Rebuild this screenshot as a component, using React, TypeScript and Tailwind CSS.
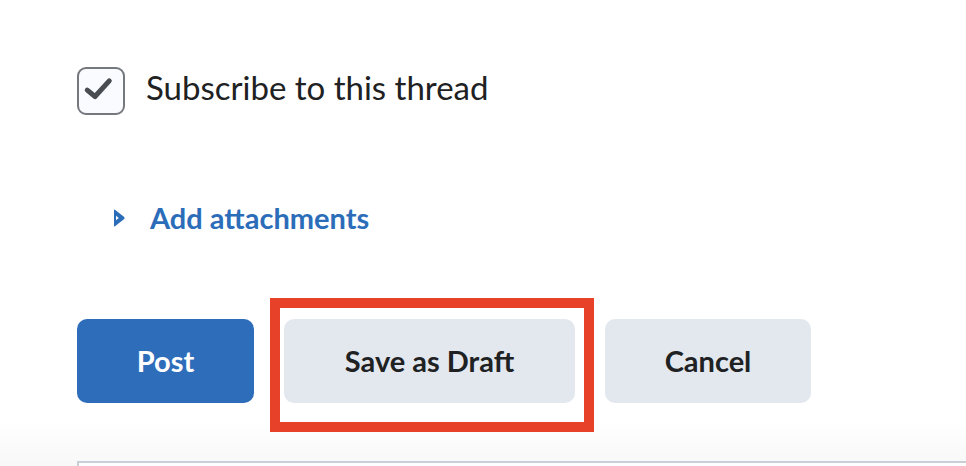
export default function App() {
  return (
    <div
      className="relative h-[466px] w-full overflow-hidden bg-[linear-gradient(to_bottom,#ffffff_0px,#ffffff_420px,#f8f8f8_466px)] text-[#202122]"
      style={{ fontFamily: "Lato, 'Noto Sans', sans-serif" }}
    >
      <div className="pl-[77px] pt-[67px]">
        {/* subscribe checkbox */}
        <label className="flex items-center gap-[21px]">
          <span className="flex h-[48px] w-[48px] items-center justify-center rounded-[9px] border-2 border-[#75797e] bg-[#f9fbff]">
            <svg width="48" height="48" viewBox="0 0 48 48" fill="none" aria-hidden>
              <path
                d="M11 25 L19.5 32 L35 15"
                stroke="#494c50"
                strokeWidth="5.5"
                strokeLinecap="round"
                strokeLinejoin="round"
                transform="translate(-2 -2)"
              />
            </svg>
          </span>
          <span className="-mt-[8px] text-[33px] leading-none">Subscribe to this thread</span>
        </label>

        {/* attachments toggle */}
        <div className="mt-[88px] flex items-center gap-[25px] pl-[36px] text-[#2c6dba]">
          <svg width="12" height="18" viewBox="0 0 12 18" aria-hidden>
            <path
              d="M1 1.2 Q1 0 2 0.7 L11.2 8.1 Q12 9 11.2 9.9 L2 17.3 Q1 18 1 16.8 Z M3 6.8 L3 11.2 L5.8 9 Z"
              fill="currentColor"
              fillRule="evenodd"
            />
          </svg>
          <span className="text-[29px] font-bold leading-none">Add attachments</span>
        </div>

        {/* actions */}
        <div className="mt-[87px] flex gap-[30px]">
          <button className="h-[84px] w-[177px] rounded-[10px] bg-[#2e6dba] text-[29px] font-bold text-white">
            Post
          </button>
          <div className="relative">
            <button className="h-[84px] w-[291px] rounded-[10px] bg-[#e3e8ef] text-[29px] font-bold">
              Save as Draft
            </button>
            <span className="pointer-events-none absolute -bottom-[29px] -left-[14px] -right-[19px] -top-[21px] border-[10px] border-[#e8412a]" />
          </div>
          <button className="h-[84px] w-[206px] rounded-[10px] bg-[#e3e8ef] text-[29px] font-bold">
            Cancel
          </button>
        </div>

        {/* editor box peeking in */}
        <div className="mt-[58px] h-[40px] border-l-2 border-t-2 border-[#c9cfd6] bg-white" />
      </div>
    </div>
  );
}
